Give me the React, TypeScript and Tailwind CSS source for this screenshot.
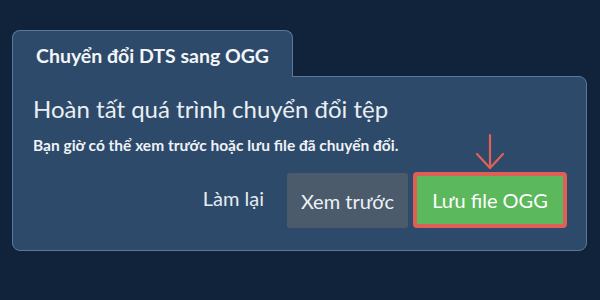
import React from "react";

export default function App() {
  return (
    <div
      className="w-[600px] h-[300px] bg-[#11233a] pt-[30px] pl-[12px] pr-[13px]"
      style={{ fontFamily: "Lato, 'Noto Sans', sans-serif" }}
    >
      <div className="relative z-10 w-[281px] h-[47px] -mb-px bg-[#2d4a6a] border border-b-0 border-[#5a7898] rounded-t-[8px] pl-[23px] pt-[12px]">
        <span className="text-[19.5px] font-bold text-[#f3f5f7] leading-[26px]">Chuyển đổi DTS sang OGG</span>
      </div>
      <div className="h-[175px] bg-[#2d4a6a] border border-[#5a7898] rounded-[8px] rounded-tl-none pl-[20px] pr-[19px] pt-[16px]">
        <div className="text-[24px] text-[#e9eef3] leading-[32px]">Hoàn tất quá trình chuyển đổi tệp</div>
        <div className="text-[15.5px] font-bold text-[#eef2f5] leading-[20px] mt-[10px]">
          Bạn giờ có thể xem trước hoặc lưu file đã chuyển đổi.
        </div>
        <div className="flex justify-end items-end mt-[17px]">
          <span className="text-[20px] text-[#e6ebf0] mr-[23px] mb-[15px]">Làm lại</span>
          <div className="w-[121px] h-[55px] bg-[#4b5b6c] rounded-[3px] flex items-center justify-center text-[20px] text-[#eef2f5]">
            Xem trước
          </div>
          <div className="relative ml-[5px]">
            <svg
              className="absolute left-[62px] -top-[39px]"
              width="30"
              height="38"
              viewBox="0 0 30 38"
              fill="none"
              stroke="#e0605a"
              strokeWidth="2.2"
              strokeLinecap="round"
              strokeLinejoin="round"
            >
              <path d="M15 2 L15 35" />
              <path d="M2 21 L15 35 L28 21" />
            </svg>
            <div className="w-[154px] h-[56px] bg-[#5cb85c] border-[4px] border-[#df5e58] rounded-[4px] flex items-center justify-center text-[20px] text-white">
              Lưu file OGG
            </div>
          </div>
        </div>
      </div>
    </div>
  );
}
